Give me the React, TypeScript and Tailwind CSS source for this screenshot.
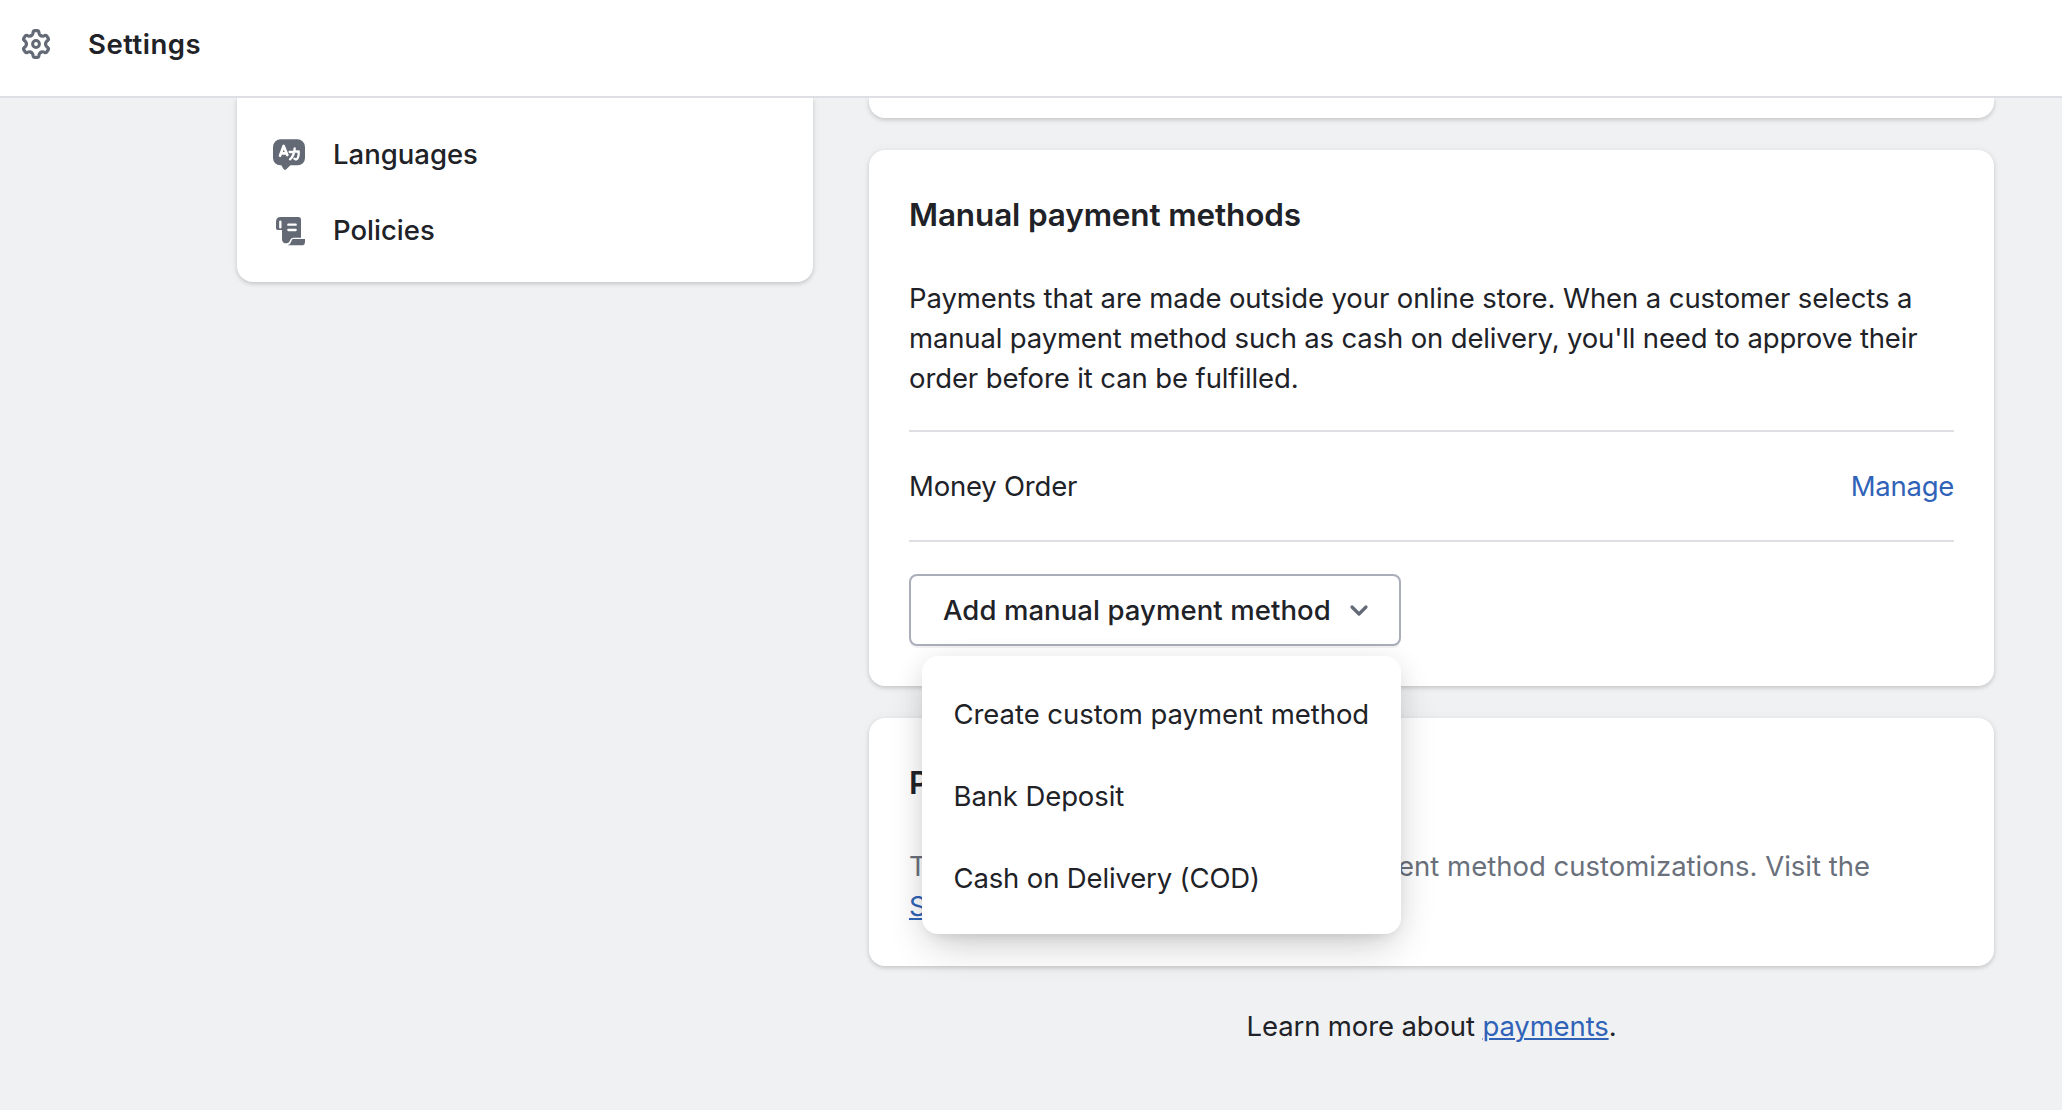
import type { ReactNode } from "react";

const CARD = "bg-white shadow-[0_0_10px_rgba(23,24,24,0.05),0_2px_4px_rgba(0,0,0,0.15)]";

function GearIcon() {
  const tooth =
    "M-4.8 -8.3Q-3.3 -9.2 -3.1 -10.4L-2.9 -11.8Q-2.6 -13.4 -1.2 -13.4H1.2Q2.6 -13.4 2.9 -11.8L3.1 -10.4Q3.3 -9.2 4.8 -8.3";
  return (
    <svg className="h-8 w-8 shrink-0" viewBox="-16 -16 32 32" fill="none" stroke="#636a75" strokeWidth="3.2" strokeLinecap="round">
      {[0, 60, 120, 180, 240, 300].map((angle) => (
        <path key={angle} d={tooth} transform={`rotate(${angle})`} />
      ))}
      <circle r="3.4" strokeWidth="3" />
    </svg>
  );
}

function LanguagesIcon() {
  return (
    <svg className="h-10 w-11 shrink-0" viewBox="0 0 132 120" fill="none">
      <path
        d="M38 16H88A23 23 0 0 1 111 39V72A22 22 0 0 1 89 94H67L55 106Q51 109 47 106L40 94H37A22 22 0 0 1 15 72V39A23 23 0 0 1 38 16Z"
        fill="#636a75"
      />
      <g stroke="#fff" strokeLinecap="round" strokeLinejoin="round">
        <path d="M36 65L47 36L58 63M41 58H56" strokeWidth="8" />
        <path d="M65 54L92 52Q93 68 87 75Q84 78 79 74M80 43Q79 65 66 76" strokeWidth="7" />
      </g>
    </svg>
  );
}

function PoliciesIcon() {
  return (
    <svg className="mt-1 h-10 w-11 shrink-0" viewBox="0 0 132 120" fill="none">
      <path
        d="M38 15H91Q99 15 99 23V77H76Q68 77 66 85Q64 94 55 94Q42 94 42 80V54H29Q24 54 24 48V30Q24 15 38 15Z"
        fill="#636a75"
      />
      <path d="M76 81H111V89Q111 100 101 100H59Q68 97 70 88Q71 81 76 81Z" fill="#636a75" />
      <path d="M37 29V46" stroke="#fff" strokeWidth="7" strokeLinecap="round" />
      <path d="M61 38H83M61 54H83" stroke="#fff" strokeWidth="7" strokeLinecap="round" />
    </svg>
  );
}

function NavItem({ icon, children }: { icon: ReactNode; children: ReactNode }) {
  return (
    <div className="flex h-10 items-center gap-[21px] font-medium">
      {icon}
      <span>{children}</span>
    </div>
  );
}

export default function App() {
  return (
    <div className="flex h-[1110px] w-[2062px] flex-col overflow-hidden bg-[#f0f1f3] font-[Inter,sans-serif] text-[27.5px] leading-10 text-[#202227]">
      <header className="flex h-[98px] shrink-0 items-start border-b-2 border-[#dedfe4] bg-white pt-6 pl-5">
        <div className="flex h-10 items-center gap-9">
          <GearIcon />
          <h1 className="font-semibold tracking-[0.5px]">Settings</h1>
        </div>
      </header>

      <div className="flex min-h-0 flex-1 items-start gap-14 overflow-hidden pl-[237px]">
        <nav className={`${CARD} flex w-[576px] shrink-0 flex-col gap-9 rounded-b-2xl pt-9 pb-8 pl-[31px]`}>
          <NavItem icon={<LanguagesIcon />}>Languages</NavItem>
          <NavItem icon={<PoliciesIcon />}>Policies</NavItem>
        </nav>

        <main className="flex w-[1125px] shrink-0 flex-col">
          <div className={`${CARD} h-5 rounded-b-2xl`} />

          <section className={`${CARD} relative z-10 mt-8 h-[536px] rounded-2xl px-10 pt-[45px]`}>
            <h2 className="text-[31.5px] font-semibold tracking-[-0.14px]">Manual payment methods</h2>
            <p className="mt-[43px] flex flex-col whitespace-nowrap">
              <span className="tracking-[-0.092px]">
                Payments that are made outside your online store. When a customer selects a
              </span>
              <span className="tracking-[-0.155px]">
                manual payment method such as cash on delivery, you'll need to approve their
              </span>
              <span className="tracking-[-0.112px]">order before it can be fulfilled.</span>
            </p>
            <div className="mt-8 flex h-28 items-center justify-between border-y-2 border-[#dedfe4]">
              <span className="tracking-[-0.206px]">Money Order</span>
              <a className="tracking-[-0.27px] text-[#3063b8]">Manage</a>
            </div>
            <div className="relative mt-8 w-[492px]">
              <button className="flex h-[72px] w-full items-center rounded-lg border-2 border-[#a9aeba] bg-white pb-px pl-8 font-medium tracking-[0.078px] whitespace-nowrap shadow-[0_2px_0_rgba(0,0,0,0.05)]">
                Add manual payment method
                <svg className="ml-4 h-5 w-6 shrink-0" viewBox="0 0 24 20" fill="none">
                  <path d="M5 7L12 14L19 7" stroke="#636a75" strokeWidth="3.2" strokeLinecap="round" strokeLinejoin="round" />
                </svg>
              </button>
              <div className="absolute top-[82px] right-0 flex h-[278px] w-[479px] flex-col gap-[42px] rounded-2xl bg-white pt-[38px] pl-[31.5px] whitespace-nowrap shadow-[0_6px_12px_-6px_rgba(23,24,24,0.08),0_16px_40px_-8px_rgba(23,24,24,0.24),0_0_24px_rgba(23,24,24,0.05)]">
                <span className="tracking-[-0.056px]">Create custom payment method</span>
                <span className="tracking-[-0.108px]">Bank Deposit</span>
                <span className="tracking-[-0.149px]">Cash on Delivery (COD)</span>
              </div>
            </div>
          </section>

          <section className={`${CARD} mt-8 h-[248px] rounded-2xl px-10 pt-[45px]`}>
            <h2 className="text-[31.5px] font-semibold tracking-[-0.6px]">Payment method customizations</h2>
            <div className="mt-[43px] text-[#69707b]">
              <p className="flex w-[961px] justify-between whitespace-nowrap">
                <span className="tracking-[-0.5px]">There currently aren't any active</span>
                <span>payment method customizations. Visit the</span>
              </p>
              <a className="text-[#3063b8] underline decoration-2 underline-offset-2">Shopify App Store</a>
            </div>
          </section>

          <footer className="mt-10 text-center tracking-[-0.13px]">
            Learn more about{" "}
            <a className="text-[#3063b8] underline decoration-2 underline-offset-2">payments</a>.
          </footer>
        </main>
      </div>
    </div>
  );
}
